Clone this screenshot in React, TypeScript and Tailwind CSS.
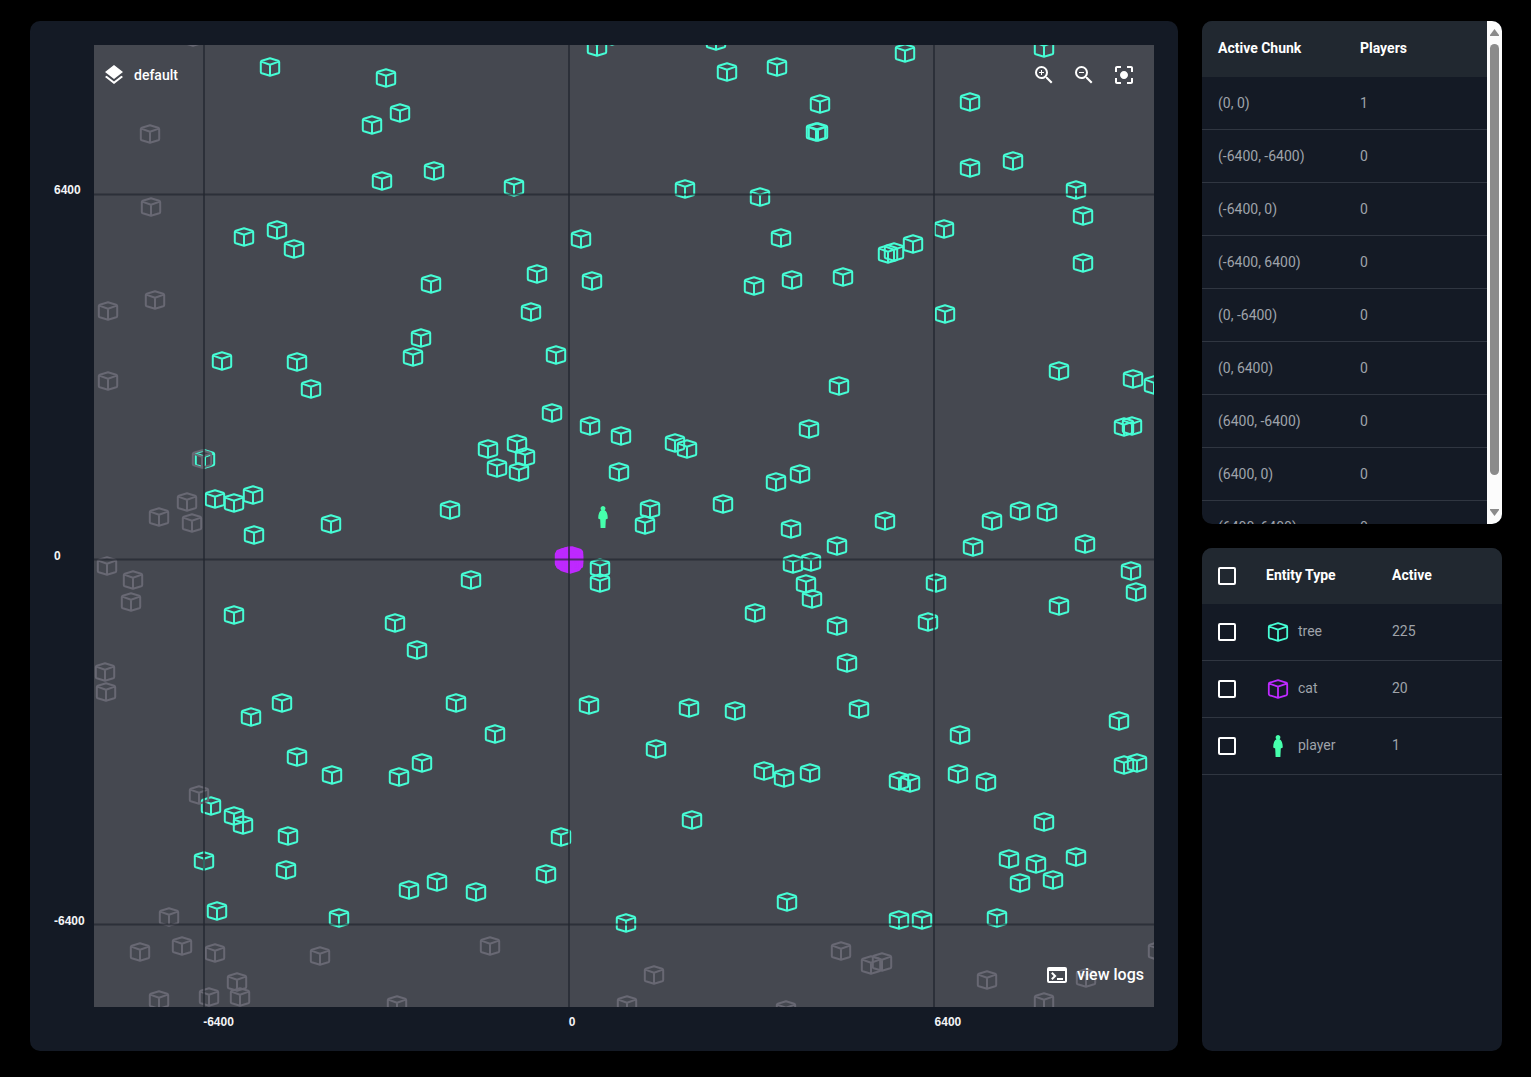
import React from "react";
import { MdLayers, MdZoomIn, MdZoomOut, MdCenterFocusStrong, MdTerminal } from "react-icons/md";

type Point = [number, number];

const MAP_W = 1060;
const MAP_H = 962;
const GRID_X = [110, 475, 840];
const GRID_Y = [149, 514, 879];

const TREES: Point[] = [
  [176, 22], [292, 33], [306, 68], [278, 80], [288, 136], [340, 126], [420, 142], [503, 2], [518, -9], [622, -4], [633, 27],
  [683, 22], [811, 8], [950, 3], [726, 59], [722, 87], [724, 87], [876, 57], [876, 123], [919, 116], [982, 145], [989, 171],
  [989, 218], [591, 144], [666, 152], [150, 192], [183, 185], [200, 204], [487, 194], [687, 193], [794, 209], [800, 207], [819, 199], [850, 184],
  [443, 229], [337, 239], [498, 236], [660, 241], [698, 235], [749, 232], [437, 267], [851, 269], [327, 293], [319, 312], [462, 310],
  [128, 316], [203, 317], [217, 344], [745, 341], [965, 326], [1039, 334], [1060, 340], [458, 368], [496, 381], [527, 391], [715, 384],
  [1030, 382], [1038, 381], [394, 404], [423, 399], [431, 412], [403, 423], [425, 427], [581, 398], [593, 404], [525, 427], [706, 429], [682, 437],
  [111, 414], [121, 454], [140, 458], [159, 450], [160, 490], [237, 479], [356, 465], [556, 464], [551, 480], [629, 459],
  [697, 484], [791, 476], [898, 476], [926, 466], [953, 467], [743, 501], [879, 502], [991, 499], [717, 517], [699, 519], [712, 539], [718, 554],
  [506, 523], [506, 538], [377, 535], [842, 538], [1037, 526], [1042, 547], [140, 570], [301, 578], [661, 568], [743, 581], [834, 577], [965, 561],
  [323, 605], [753, 618], [362, 658], [188, 658], [157, 672], [495, 660], [595, 663], [641, 666], [765, 664], [401, 689], [866, 690], [1025, 676],
  [203, 712], [238, 730], [305, 732], [328, 718], [562, 704], [670, 726], [690, 733], [716, 728], [805, 736], [816, 738], [864, 729], [892, 737],
  [1030, 720], [1043, 718], [117, 761], [140, 771], [149, 780], [194, 791], [598, 775], [950, 777], [467, 792], [110, 816], [192, 825], [452, 829],
  [315, 845], [343, 837], [382, 847], [915, 814], [942, 819], [982, 812], [926, 838], [959, 835], [123, 866], [245, 873], [532, 878], [693, 857],
  [805, 875], [828, 875], [903, 873],
];

const INACTIVE: Point[] = [
  [99, -8], [56, 89], [57, 162], [61, 255], [14, 266], [14, 336], [108, 414], [93, 457], [65, 472], [98, 478], [13, 521], [39, 535], [37, 557],
  [11, 627], [12, 647], [105, 750], [75, 872], [46, 907], [88, 901], [121, 908], [226, 911], [396, 901], [143, 937], [115, 952], [146, 952],
  [65, 955], [303, 960], [533, 960], [560, 930], [692, 965], [747, 906], [777, 920], [788, 917], [893, 935], [950, 957], [992, 933], [1064, 906],
];

const CATS: Point[] = [
  [472, 512], [478, 511], [475, 515], [473, 517], [477, 518], [471, 514], [479, 514], [475, 511], [474, 512], [476, 513],
  [479, 512], [472, 516], [475, 518], [477, 516], [473, 513], [477, 512], [475, 512], [474, 517], [479, 516], [476, 519],
];

const CHUNKS: [string, number][] = [
  ["(0, 0)", 1], ["(-6400, -6400)", 0], ["(-6400, 0)", 0], ["(-6400, 6400)", 0], ["(0, -6400)", 0],
  ["(0, 6400)", 0], ["(6400, -6400)", 0], ["(6400, 0)", 0], ["(6400, 6400)", 0],
];

const CUBE = "M0-8.8 8.2-6.3Q9.2-5.9 9.2-4.9V4.9Q9.2 5.9 8.2 6.3L0 8.8-8.2 6.3Q-9.2 5.9-9.2 4.9V-4.9Q-9.2-5.9-8.2-6.3ZM-8.8-5.4 0-2.3 8.8-5.4M0-2.3V8.8";
const PERSON = "M0-11a2.4 2.4 0 0 1 1.6 4.2C3.6-6 4.8-3 4.8 1.4L2.8 2.4 2.4 11H-2.4L-2.8 2.4-4.8 1.4C-4.8-3-3.6-6-1.6-6.8A2.4 2.4 0 0 1 0-11Z";

function Cubes({ points, className }: { points: Point[]; className: string }) {
  return (
    <g fill="none" strokeWidth="2" strokeLinejoin="round" className={className}>
      {points.map(([x, y], i) => (
        <path key={i} d={CUBE} transform={`translate(${x} ${y})`} />
      ))}
    </g>
  );
}

function WorldMap() {
  return (
    <svg viewBox={`0 0 ${MAP_W} ${MAP_H}`} preserveAspectRatio="none" className="block h-full w-full" role="img" aria-label="World map">
      <Cubes points={TREES} className="stroke-[#46fdd5]" />
      <Cubes points={INACTIVE} className="stroke-[#686873]" />
      <Cubes points={CATS} className="stroke-[#be29ff]" />
      <path d={PERSON} transform="translate(509 472)" className="fill-[#46ffac]" />
      <g className="stroke-[#22262f]/70" strokeWidth="2">
        {GRID_X.map((x) => (
          <path key={x} d={`M${x} 0V${MAP_H}`} />
        ))}
        {GRID_Y.map((y) => (
          <path key={y} d={`M0 ${y + 0.5}H${MAP_W}`} />
        ))}
      </g>
    </svg>
  );
}

function EntityIcon({ type }: { type: string }) {
  return (
    <svg viewBox="-12 -12 24 24" className="size-6" aria-hidden="true">
      {type === "player" ? (
        <path d={PERSON} className="fill-[#46ffac]" />
      ) : (
        <path d={CUBE} fill="none" strokeWidth="1.8" strokeLinejoin="round" className={type === "tree" ? "stroke-[#46fdd5]" : "stroke-[#be29ff]"} />
      )}
    </svg>
  );
}

function Check({ label }: { label: string }) {
  return <input type="checkbox" aria-label={label} className="block size-[18px] appearance-none rounded-xs border-2 border-white checked:bg-white" />;
}

export default function App() {
  return (
    <div className="flex h-screen gap-6 bg-black px-[30px] pt-[21px] pb-[26px] font-[Roboto,sans-serif] text-sm">
      <main className="grid min-w-0 flex-1 grid-cols-[40px_minmax(0,1fr)] grid-rows-[minmax(0,1fr)_20px] rounded-[10px] bg-[#141a25] p-6">
        <div className="grid grid-rows-[15.9%_38%_38%] font-['Liberation_Sans',sans-serif] text-xs font-bold text-gray-100">
          <span className="self-end">6400</span>
          <span className="self-end">0</span>
          <span className="self-end">-6400</span>
        </div>
        <section className="relative min-h-0 overflow-hidden bg-[#454850] text-white">
          <WorldMap />
          <button className="absolute top-[18px] left-2 flex items-center gap-2 font-medium">
            <MdLayers className="size-6" />
            default
          </button>
          <div className="absolute top-[18px] right-[18px] flex gap-4">
            <button aria-label="Zoom in"><MdZoomIn className="size-6" /></button>
            <button aria-label="Zoom out"><MdZoomOut className="size-6" /></button>
            <button aria-label="Center view"><MdCenterFocusStrong className="size-6" /></button>
          </div>
          <button className="absolute right-[10px] bottom-5 flex items-center gap-2 text-base font-medium">
            <MdTerminal className="size-6" />
            view logs
          </button>
        </section>
        <div />
        <div className="grid grid-cols-[10.3%_34.5%_34.5%_1fr] pt-[7px] font-['Liberation_Sans',sans-serif] text-xs font-bold text-gray-100">
          <span className="col-start-2">-6400</span>
          <span>0</span>
          <span>6400</span>
        </div>
      </main>

      <aside className="-mr-px flex w-[300px] shrink-0 flex-col gap-6 text-[#9fa3aa]">
        <section className="flex min-h-0 flex-1 overflow-hidden rounded-[10px] bg-[#141a25]">
          <div className="min-w-0 flex-1 overflow-y-auto [scrollbar-width:none]">
            <table className="w-full table-fixed border-separate border-spacing-0 text-left">
              <thead className="bg-[#212830] text-white">
                <tr className="h-14">
                  <th className="w-[158px] p-0 pb-0.5 pl-4 font-bold">Active Chunk</th>
                  <th className="p-0 pb-0.5 font-bold">Players</th>
                </tr>
              </thead>
              <tbody>
                {CHUNKS.map(([chunk, players]) => (
                  <tr key={chunk} className="h-[53px]">
                    <td className="border-b border-[#303641] p-0 pb-px pl-4">{chunk}</td>
                    <td className="border-b border-[#303641] p-0 pb-px">{players}</td>
                  </tr>
                ))}
              </tbody>
            </table>
          </div>
          <div className="flex w-[15px] flex-col items-center bg-[#fcfcfc] py-2" aria-hidden="true">
            <svg viewBox="0 0 9 7" className="h-[7px] w-[9px] fill-[#8b8b8b]"><path d="M4.5 0 9 6V7H0V6Z" /></svg>
            <div className="mt-2 h-[431px] w-[9px] rounded-full bg-[#8b8b8b]" />
            <svg viewBox="0 0 9 7" className="mt-auto h-[7px] w-[9px] fill-[#8b8b8b]"><path d="M4.5 7 9 1V0H0V1Z" /></svg>
          </div>
        </section>
        <section className="min-h-0 flex-1 overflow-hidden rounded-[10px] bg-[#141a25]">
          <table className="w-full table-fixed border-separate border-spacing-0 text-left">
            <thead className="bg-[#212830] text-white">
              <tr className="h-14">
                <th className="w-16 p-0 pl-4"><Check label="Select all entity types" /></th>
                <th className="w-[126px] p-0 pb-0.5 font-bold">Entity Type</th>
                <th className="p-0 pb-0.5 font-bold">Active</th>
              </tr>
            </thead>
            <tbody>
              {[["tree", 225], ["cat", 20], ["player", 1]].map(([type, count]) => (
                <tr key={type} className="h-[57px]">
                  <td className="border-b border-[#303641] p-0 pl-4"><Check label={`Select ${type}`} /></td>
                  <td className="border-b border-[#303641] p-0">
                    <div className="flex items-center gap-2">
                      <EntityIcon type={String(type)} />
                      <span className="pb-0.5">{type}</span>
                    </div>
                  </td>
                  <td className="border-b border-[#303641] p-0 pb-0.5">{count}</td>
                </tr>
              ))}
            </tbody>
          </table>
        </section>
      </aside>
    </div>
  );
}
